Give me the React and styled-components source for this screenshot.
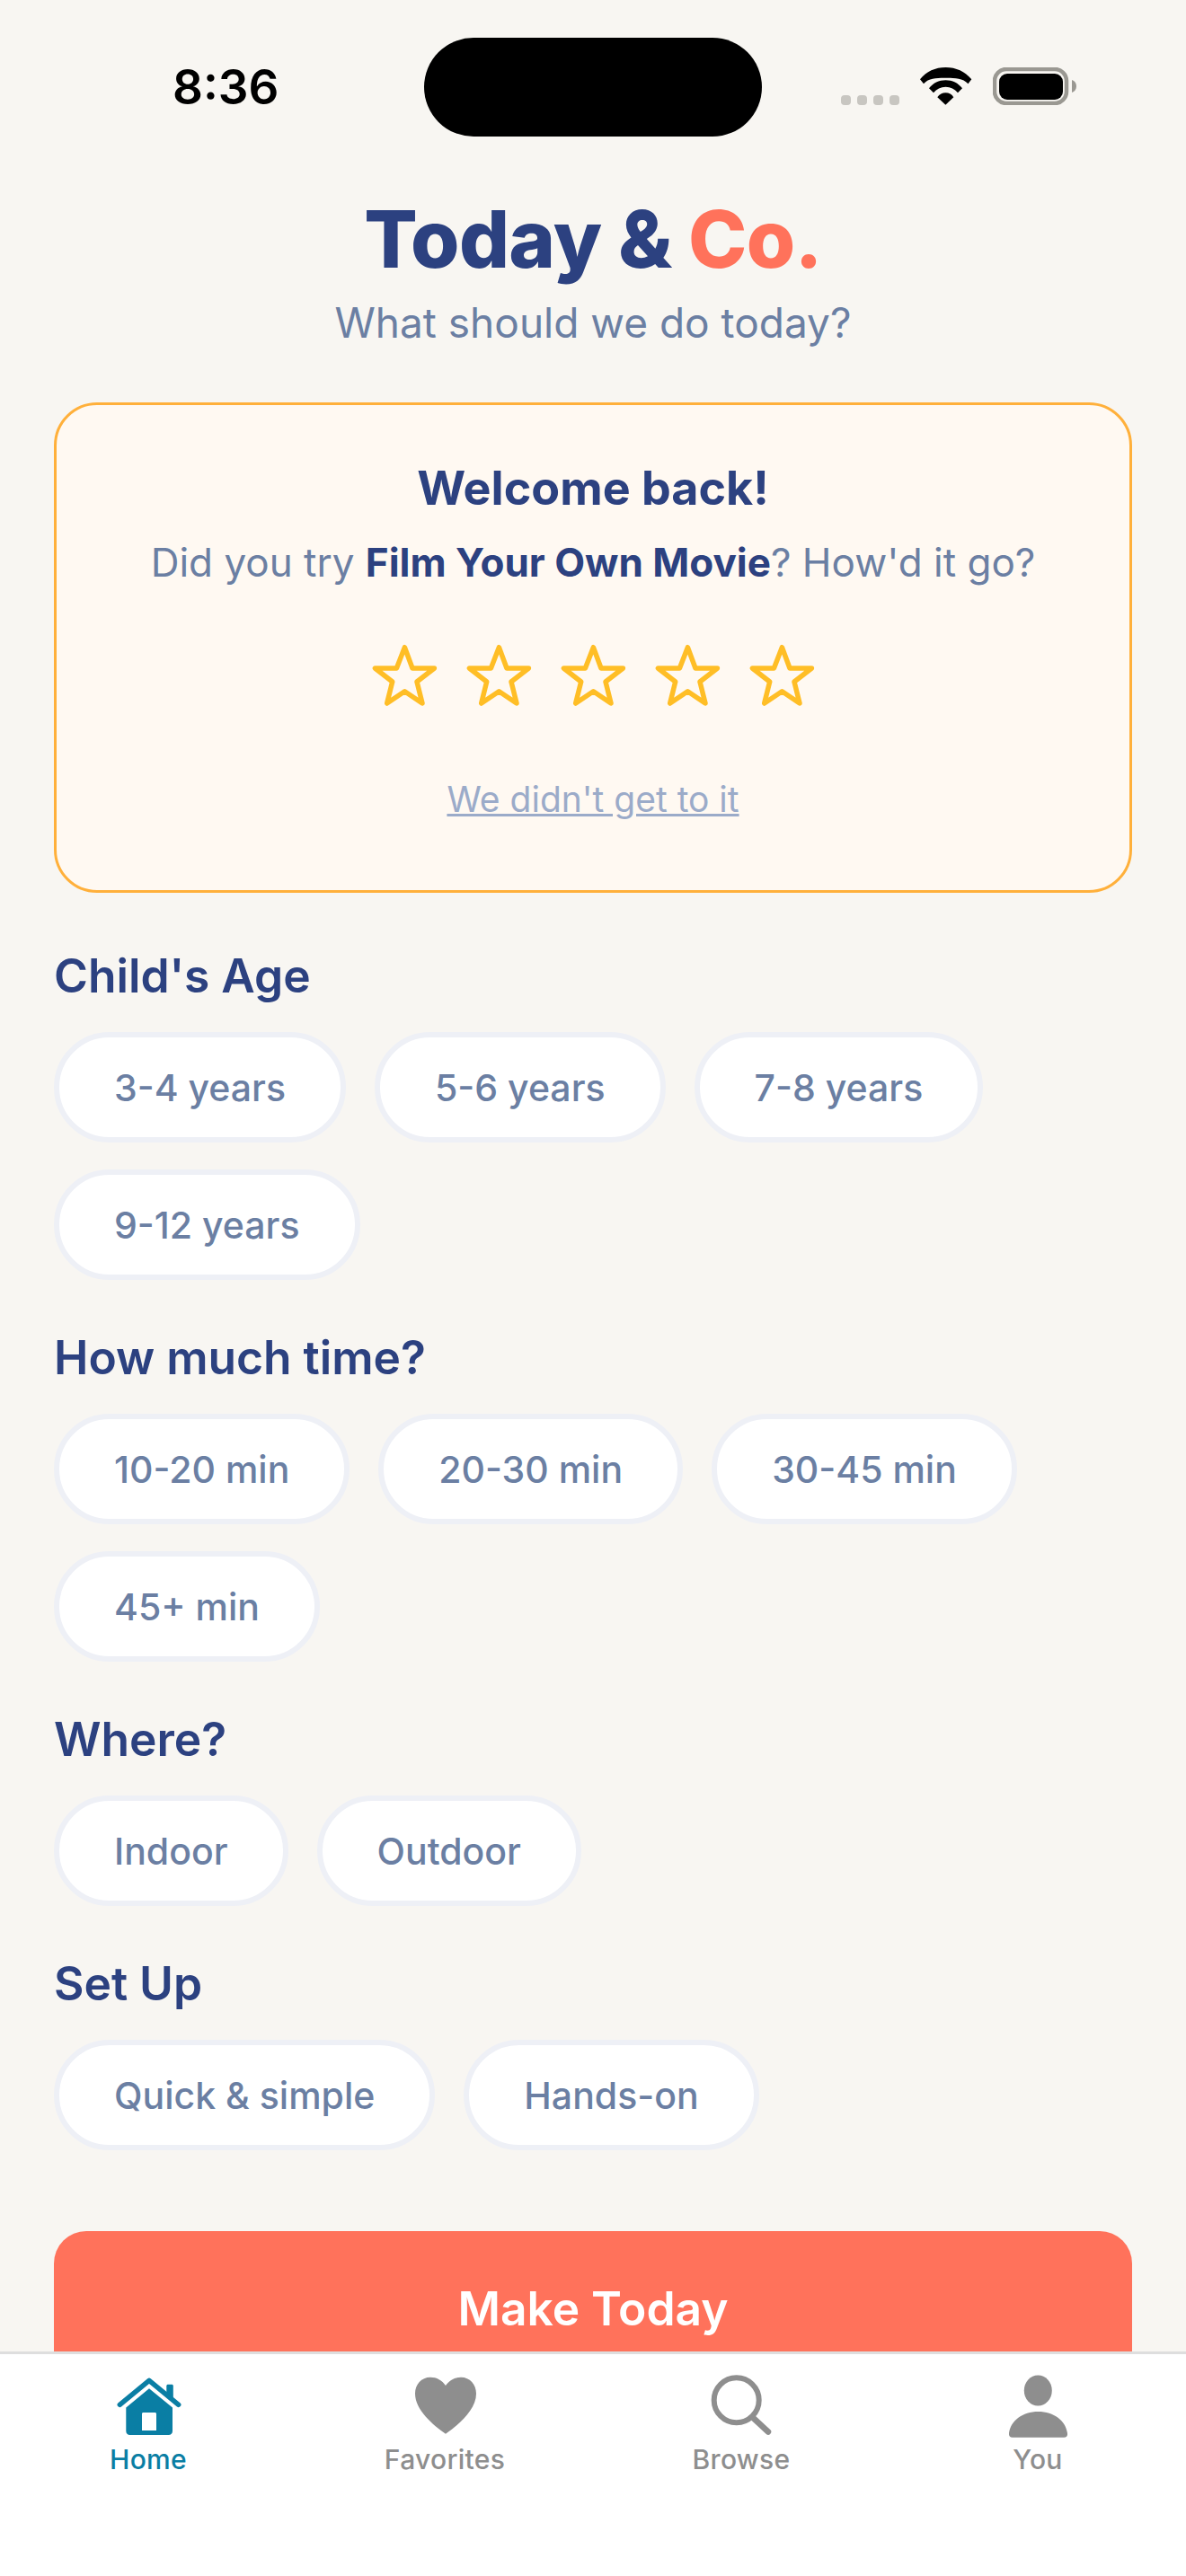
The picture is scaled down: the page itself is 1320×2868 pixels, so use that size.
import React from 'react';
import styled, { createGlobalStyle } from 'styled-components';

const GlobalStyle = createGlobalStyle`
  html, body {
    margin: 0;
    padding: 0;
    background: #f8f6f2;
    font-family: Inter, "Noto Sans", sans-serif;
  }
`;

const Screen = styled.div`
  width: 1320px;
  height: 2868px;
  display: flex;
  flex-direction: column;
  overflow: hidden;
  background: #f8f6f2;
`;

const Content = styled.main`
  flex: 1;
  min-height: 0;
  overflow: hidden;
`;

const StatusBar = styled.div`
  height: 110px;
  padding: 42px 122px 0 192px;
  display: flex;
  align-items: flex-start;
`;

const Clock = styled.div`
  width: 280px;
  margin-top: 25px;
  font-size: 53px;
  line-height: 60px;
  font-weight: 600;
  color: #000;
`;

const Island = styled.div`
  width: 376px;
  height: 110px;
  border-radius: 55px;
  background: #000;
`;

const StatusIcons = styled.div`
  margin-left: auto;
  display: flex;
  align-items: flex-end;
  padding-top: 33px;
  gap: 23px;
`;

const Header = styled.header`
  margin-top: 66px;
  text-align: center;
`;

const Title = styled.h1`
  margin: 0;
  font-size: 88px;
  line-height: 96px;
  font-weight: 800;
  letter-spacing: -0.7px;
  color: #2c4180;
`;

const Accent = styled.span`
  color: #ff725b;
`;

const Subtitle = styled.p`
  margin: 15px 0 0;
  font-size: 46px;
  line-height: 60px;
  color: #6b7fa3;
`;

const Card = styled.section`
  margin: 59px 60px 0;
  height: 546px;
  box-sizing: border-box;
  padding-top: 60px;
  border: 3px solid #ffb03b;
  border-radius: 48px;
  background: #fff9f2;
  text-align: center;
`;

const CardTitle = styled.h2`
  margin: 0;
  font-size: 52px;
  line-height: 66px;
  font-weight: 700;
  color: #2c4180;
`;

const CardText = styled.p`
  margin: 19px 0 0;
  font-size: 44px;
  line-height: 60px;
  color: #6b7fa3;
`;

const Strong = styled.strong`
  font-weight: 700;
  color: #2c4180;
`;

const Stars = styled.div`
  margin-top: 61px;
  display: flex;
  justify-content: center;
  gap: 32px;
`;

const SkipLink = styled.a`
  display: block;
  margin-top: 76px;
  font-size: 39px;
  line-height: 54px;
  color: #9babc9;
  text-decoration: underline;
`;

const Filters = styled.div`
  margin: 59px 60px 0;
`;

const Section = styled.section`
  margin-bottom: 53px;
`;

const SectionLabel = styled.h3`
  margin: 0 0 30px;
  font-size: 51.5px;
  line-height: 66px;
  font-weight: 600;
  color: #2c4180;
`;

const Pills = styled.div`
  display: flex;
  flex-wrap: wrap;
  gap: 30px 32px;
`;

const Pill = styled.button`
  box-sizing: border-box;
  height: 123px;
  padding: 0 61px;
  border: 6px solid #eef0f6;
  border-radius: 62px;
  background: #fff;
  font-family: inherit;
  font-size: 41px;
  font-weight: 500;
  color: #6b7fa3;
`;

const MakeButton = styled.button`
  display: block;
  box-sizing: border-box;
  width: 1200px;
  height: 172px;
  margin: 90px 60px 0;
  border: 0;
  border-radius: 36px;
  background: #ff725b;
  font-family: inherit;
  font-size: 51.5px;
  font-weight: 600;
  color: #fff;
`;

const TabBar = styled.nav`
  height: 250px;
  box-sizing: border-box;
  padding-top: 16px;
  display: grid;
  grid-template-columns: repeat(4, 1fr);
  align-items: start;
  border-top: 3px solid #dedede;
  background: #fff;
`;

const Tab = styled.div`
  display: flex;
  flex-direction: column;
  align-items: center;
  font-size: 30px;
  line-height: 36px;
  font-weight: 500;
  letter-spacing: 0.3px;
  color: ${({ $active }) => ($active ? '#0a7ea4' : '#8e8e8e')};
`;

const TabIcon = styled.svg`
  display: block;
  width: 84px;
  height: 84px;
  margin-bottom: -1px;
`;

function StarIcon() {
  return (
    <svg width="73" height="70" viewBox="0 0 73 70" fill="none">
      <path
        d="M36.4 3.7 L45 27 H69.4 L50 42 L56 66 L36.4 52.7 L16.7 66 L22.7 42 L3.4 27 H27.4 Z"
        stroke="#ffbe26"
        strokeWidth="5.5"
        strokeLinejoin="round"
      />
    </svg>
  );
}

function CellDots() {
  return (
    <svg width="65" height="11" viewBox="0 0 65 11" fill="#c8c6c1">
      <rect x="0" width="11" height="11" rx="4" />
      <rect x="18" width="11" height="11" rx="4" />
      <rect x="36" width="11" height="11" rx="4" />
      <rect x="54" width="11" height="11" rx="4" />
    </svg>
  );
}

function WifiIcon() {
  return (
    <svg width="58" height="42" viewBox="0 0 58 42" fill="#000">
      <path d="M0 13.3 C7 4.5 17 0 28.5 0 C40 0 50 4.5 57.3 13.3 L53.5 18.3 C47 11.5 38.5 11.7 28.5 11.7 C18.5 11.7 10 11.5 4 18.3 Z" />
      <path d="M10 23.3 C14.5 17.5 21 14.3 28.5 14.3 C36 14.3 42.5 17.5 47 23.3 L42 28.3 C38.5 24 34 21.7 28.5 21.7 C23 21.7 18.5 24 15 28.3 Z" />
      <path d="M19.3 33.3 C21.5 30 24.8 28.3 28.5 28.3 C32.2 28.3 35.5 30 37.3 33.3 L28.4 41.7 Z" />
    </svg>
  );
}

function BatteryIcon() {
  return (
    <svg width="93" height="42" viewBox="0 0 93 42">
      <rect x="2" y="2" width="80" height="38" rx="13" fill="none" stroke="#9a9892" strokeWidth="4.5" />
      <rect x="7" y="7" width="71" height="29" rx="9" fill="#000" />
      <path d="M88 14 C91 15 93 17.5 93 21 C93 24.5 91 27 88 28 Z" fill="#9a9892" />
    </svg>
  );
}

function HomeIcon() {
  return (
    <TabIcon viewBox="0 0 84 84" fill="#0a7ea4">
      <path d="M10.3 40.3 L43 13.3 L75.7 40.3" fill="none" stroke="#0a7ea4" strokeWidth="5.5" strokeLinecap="round" strokeLinejoin="round" />
      <path d="M62.3 19.5 C62.3 18.3 63 17.7 64.2 17.7 H68 C69.2 17.7 69.8 18.3 69.8 19.5 V33.5 L62.3 27.5 Z" />
      <path
        fillRule="evenodd"
        d="M43 22.3 L69 43.5 V69.5 C69 72.3 67.3 74 64.5 74 H21.7 C19 74 17.3 72.3 17.3 69.5 V43.5 Z M36.5 49 C35.6 49 35 49.6 35 50.5 V69 H51 V50.5 C51 49.6 50.4 49 49.5 49 Z"
      />
    </TabIcon>
  );
}

function HeartIcon() {
  return (
    <TabIcon viewBox="0 0 84 84" fill="currentColor">
      <path d="M43 19 C39 13 33 9.7 26 9.7 C16 9.7 9 17.5 9 28 C9 46 29 63 43 72.7 C57 63 77 46 77 28 C77 17.5 70 9.7 60 9.7 C53 9.7 47 13 43 19 Z" />
    </TabIcon>
  );
}

function SearchIcon() {
  return (
    <TabIcon viewBox="0 0 84 84" fill="none" stroke="currentColor">
      <circle cx="36.7" cy="35.3" r="25" strokeWidth="6" />
      <path d="M55.3 55 L72 70.5" strokeWidth="6.5" strokeLinecap="round" />
    </TabIcon>
  );
}

function PersonIcon() {
  return (
    <TabIcon viewBox="0 0 84 84" fill="currentColor">
      <ellipse cx="42.3" cy="24.5" rx="15.5" ry="17" />
      <path d="M14 76.7 H71 C74 76.7 75.5 75 75 72 C73 58 60 48 42.5 48 C25 48 12 58 10 72 C9.6 75 11 76.7 14 76.7 Z" />
    </TabIcon>
  );
}

const filterGroups = [
  { label: "Child's Age", options: ['3-4 years', '5-6 years', '7-8 years', '9-12 years'] },
  { label: 'How much time?', options: ['10-20 min', '20-30 min', '30-45 min', '45+ min'] },
  { label: 'Where?', options: ['Indoor', 'Outdoor'] },
  { label: 'Set Up', options: ['Quick & simple', 'Hands-on'] },
];

export default function App() {
  return (
    <Screen>
      <GlobalStyle />
      <Content>
        <StatusBar>
          <Clock>8:36</Clock>
          <Island />
          <StatusIcons>
            <CellDots />
            <WifiIcon />
            <BatteryIcon />
          </StatusIcons>
        </StatusBar>
        <Header>
          <Title>
            Today & <Accent>Co.</Accent>
          </Title>
          <Subtitle>What should we do today?</Subtitle>
        </Header>
        <Card>
          <CardTitle>Welcome back!</CardTitle>
          <CardText>
            Did you try <Strong>Film Your Own Movie</Strong>? How'd it go?
          </CardText>
          <Stars>
            {[1, 2, 3, 4, 5].map((n) => (
              <StarIcon key={n} />
            ))}
          </Stars>
          <SkipLink>We didn't get to it</SkipLink>
        </Card>
        <Filters>
          {filterGroups.map((group) => (
            <Section key={group.label}>
              <SectionLabel>{group.label}</SectionLabel>
              <Pills>
                {group.options.map((option) => (
                  <Pill key={option}>{option}</Pill>
                ))}
              </Pills>
            </Section>
          ))}
        </Filters>
        <MakeButton>Make Today</MakeButton>
      </Content>
      <TabBar>
        <Tab $active>
          <HomeIcon />
          Home
        </Tab>
        <Tab>
          <HeartIcon />
          Favorites
        </Tab>
        <Tab>
          <SearchIcon />
          Browse
        </Tab>
        <Tab>
          <PersonIcon />
          You
        </Tab>
      </TabBar>
    </Screen>
  );
}
